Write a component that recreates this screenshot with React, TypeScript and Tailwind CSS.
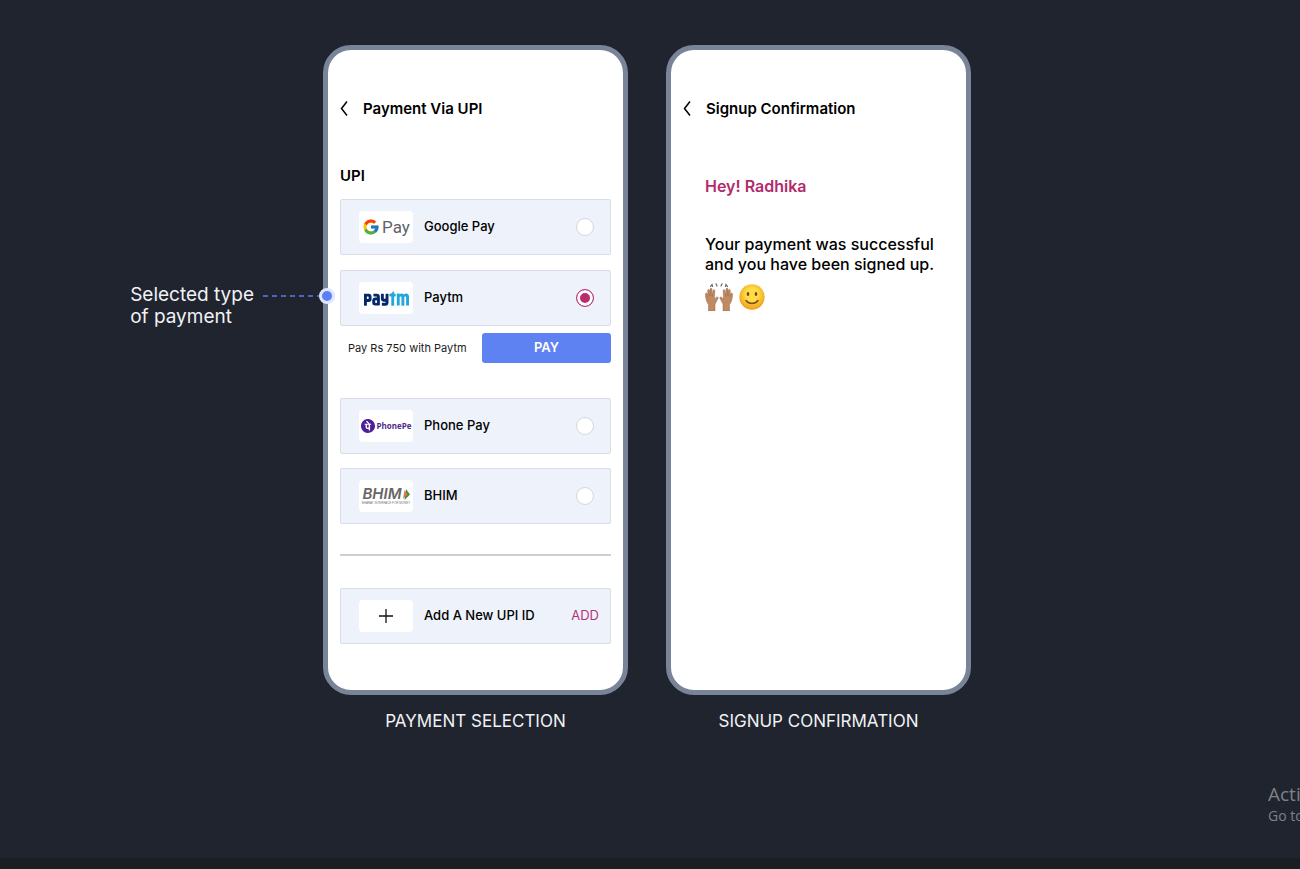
import React from 'react';
import { FcGoogle } from 'react-icons/fc';
import { SiPaytm, SiPhonepe } from 'react-icons/si';

interface PhoneProps {
  title: string;
  caption: string;
  children: React.ReactNode;
}

interface PaymentOptionProps {
  id: string;
  label: string;
  logo: React.ReactNode;
  selected: string;
  onSelect: (id: string) => void;
}

const rowClasses =
  'flex h-14 items-center rounded-xs border border-[#dadde6] bg-[#eef2fb] pl-[18px]';

const logoClasses =
  'mr-[11px] flex h-8 w-[54px] shrink-0 items-center justify-center overflow-hidden rounded-sm bg-white';

const GooglePayLogo = () => (
  <>
    <FcGoogle size={18} className="shrink-0" />
    <span className="pl-0.5 font-['Roboto',sans-serif] text-[17px] leading-5 text-[#5f6368]">
      Pay
    </span>
  </>
);

const PaytmLogo = () => (
  <>
    <svg width="0" height="0" className="absolute">
      <linearGradient id="paytm" gradientUnits="userSpaceOnUse" x1="0" x2="24" y1="0" y2="0">
        <stop offset="0.58" stopColor="#06286b" />
        <stop offset="0.58" stopColor="#21a7dc" />
      </linearGradient>
    </svg>
    <SiPaytm size={45} fill="url(#paytm)" className="shrink-0" />
  </>
);

const PhonePeLogo = () => (
  <>
    <SiPhonepe size={14} color="#4f1f96" className="shrink-0" />
    <span className="pl-0.5 font-['Open_Sans',sans-serif] text-[8px] leading-3 font-bold text-[#4f2a8c]">
      PhonePe
    </span>
  </>
);

const BhimLogo = () => (
  <div className="flex flex-col items-center">
    <div className="flex items-center">
      <span className="text-[15px] leading-[14px] font-semibold text-[#666] italic">BHIM</span>
      <svg width="8" height="11" viewBox="0 0 8 11">
        <path d="M4 0 8 5.500 2.500 11Z" fill="#3f8f4a" />
        <path d="M2.500 1 5.500 5.500 1 10Z" fill="#e8793a" />
      </svg>
    </div>
    <span className="font-['Liberation_Sans',sans-serif] text-[3px] leading-1 whitespace-nowrap text-[#777]">
      BHARAT INTERFACE FOR MONEY
    </span>
  </div>
);

const RaisedHands = () => (
  <svg width="28" height="28" viewBox="0 0 28 28" aria-hidden="true">
    <g stroke="#5d6a73" strokeWidth="1.200" fill="none" strokeLinecap="round">
      <path d="M5.500 3.500 7 1.500l.5 2M11 .8l1 2.200M17 .8l-1 2.200M20.500 3.500l.500-2 1.500 2" />
    </g>
    <g id="hand">
      <path
        d="M3.500 28v-6.500C1.500 19 .5 15.500.5 11c0-1.200 1.600-1.300 1.800 0l.6 3-.2-6.500c0-1.300 1.700-1.300 1.900 0l.4 5.500V6.300c0-1.300 1.900-1.300 2 0l.3 6.900.8-5.700c.2-1.200 1.800-1 1.700.2L9.400 16l2.200-1.800c1-.7 2 .3 1.400 1.200L10 21v7Z"
        fill="#c08a62"
        stroke="#96674a"
        strokeWidth=".5"
      />
    </g>
    <use href="#hand" transform="translate(28 0) scale(-1 1)" />
  </svg>
);

const Smile = () => (
  <svg width="26" height="26" viewBox="0 0 26 26" aria-hidden="true">
    <radialGradient id="face" cx=".5" cy=".4" r=".6">
      <stop offset="0.400" stopColor="#ffdc48" />
      <stop offset="1" stopColor="#ee9c1a" />
    </radialGradient>
    <circle cx="13" cy="13" r="12.700" fill="url(#face)" />
    <ellipse cx="9" cy="10" rx="1.300" ry="2.100" fill="#6b4316" />
    <ellipse cx="17" cy="10" rx="1.300" ry="2.100" fill="#6b4316" />
    <path
      d="M7 16.500c3 4 9 4 12 0"
      fill="none"
      stroke="#7a4a12"
      strokeWidth="1.300"
      strokeLinecap="round"
    />
  </svg>
);

const Phone = ({ title, caption, children }: PhoneProps) => (
  <figure className="flex w-[305px] shrink-0 flex-col">
    <section className="flex-1 rounded-[28px] border-[5px] border-[#7a8498] bg-white px-3 pt-[47px] pb-[46px] text-black">
      <header className="flex h-6 items-center">
        <button type="button" aria-label="Back" className="mr-[15px]">
          <svg width="8" height="16" viewBox="0 0 8 16" fill="none" stroke="currentColor" strokeWidth="1.500">
            <path d="M7 .5 1.500 7.500 7 14.500" />
          </svg>
        </button>
        <h2 className="text-[15px] font-semibold">{title}</h2>
      </header>
      {children}
    </section>
    <figcaption className="mt-[14px] text-center text-[17px] leading-6 text-[#f1f2f5]">
      {caption}
    </figcaption>
  </figure>
);

const PaymentOption = ({ id, label, logo, selected, onSelect }: PaymentOptionProps) => (
  <label className={`${rowClasses} pr-4`}>
    <span className={logoClasses}>{logo}</span>
    <span className="flex-1 text-[13px] font-medium">{label}</span>
    <input
      type="radio"
      name="upi"
      value={id}
      checked={selected === id}
      onChange={() => onSelect(id)}
      className="size-[18px] appearance-none rounded-full border border-[#d6d6d8] bg-white checked:border-[#b93a76] checked:bg-[#b92c6e] checked:shadow-[inset_0_0_0_3px_white]"
    />
  </label>
);

const Callout = () => (
  <div className="flex flex-1 items-start justify-end pt-[238px] text-[#f1f2f5]">
    <p className="pt-px text-[19px] leading-[22px] whitespace-nowrap">
      Selected type
      <br />
      of payment
    </p>
    <div className="relative z-10 -mr-3 ml-[9px] flex h-[26px] items-center">
      <svg width="60" height="2" aria-hidden="true">
        <path d="M0 1h60" stroke="#5b7cf0" strokeWidth="1.500" strokeDasharray="5 4" />
      </svg>
      <span className="-ml-1 size-4 rounded-full border-[3px] border-[#dfe6ff] bg-[#5b80f5]" />
    </div>
  </div>
);

export default function App() {
  const [selected, setSelected] = React.useState('paytm');

  return (
    <div className="flex min-h-screen flex-col overflow-hidden border-b-[11px] border-[#1a1e21] bg-[#20242f] font-['Inter',sans-serif]">
      <main className="flex flex-1 items-start pt-[45px] pr-1.5">
        <Callout />
        <div className="flex gap-[38px]">
          <Phone title="Payment Via UPI" caption="PAYMENT SELECTION">
            <h3 className="mt-[43px] text-[15px] leading-6 font-semibold">UPI</h3>
            <div className="mt-[11px] flex flex-col gap-[15px]">
              <PaymentOption
                id="gpay"
                label="Google Pay"
                logo={<GooglePayLogo />}
                selected={selected}
                onSelect={setSelected}
              />
              <PaymentOption
                id="paytm"
                label="Paytm"
                logo={<PaytmLogo />}
                selected={selected}
                onSelect={setSelected}
              />
            </div>
            <div className="mt-[7px] flex items-center justify-between pl-2">
              <p className="text-[11px] whitespace-nowrap text-[#1c1c1c]">Pay Rs 750 with Paytm</p>
              <button
                type="button"
                className="h-[30px] w-[129px] rounded-[3px] bg-[#5f82f3] text-[13px] font-semibold text-white"
              >
                PAY
              </button>
            </div>
            <div className="mt-[35px] flex flex-col gap-[14px]">
              <PaymentOption
                id="phonepe"
                label="Phone Pay"
                logo={<PhonePeLogo />}
                selected={selected}
                onSelect={setSelected}
              />
              <PaymentOption
                id="bhim"
                label="BHIM"
                logo={<BhimLogo />}
                selected={selected}
                onSelect={setSelected}
              />
            </div>
            <hr className="mt-[30px] border-t-2 border-[#cfcfd1]" />
            <div className={`${rowClasses} mt-8 pr-[11px]`}>
              <span className={logoClasses}>
                <svg width="14" height="14" viewBox="0 0 14 14" stroke="#111" strokeWidth="1.300">
                  <path d="M7 0v14M0 7h14" />
                </svg>
              </span>
              <span className="flex-1 text-[13px] font-medium">Add A New UPI ID</span>
              <button type="button" className="text-[13px] text-[#b8327a]">
                ADD
              </button>
            </div>
          </Phone>

          <Phone title="Signup Confirmation" caption="SIGNUP CONFIRMATION">
            <div className="pl-[22px]">
              <p className="mt-[53px] text-[16px] leading-6 font-semibold text-[#b32a6b]">
                Hey! Radhika
              </p>
              <p className="mt-9 text-[16px] leading-5 font-medium whitespace-nowrap">
                Your payment was successful
                <br />
                and you have been signed up.
              </p>
              <div className="mt-[9px] flex items-center gap-1.5">
                <RaisedHands />
                <Smile />
              </div>
            </div>
          </Phone>
        </div>
        <div className="flex-1" />
      </main>
      <footer className="flex justify-end pb-8 font-['Open_Sans',sans-serif] text-[#7f8186]">
        <p className="w-8 overflow-hidden whitespace-nowrap">
          <span className="block text-[19px] leading-6">Acti</span>
          <span className="block text-[14px] leading-5">Go to</span>
        </p>
      </footer>
    </div>
  );
}
